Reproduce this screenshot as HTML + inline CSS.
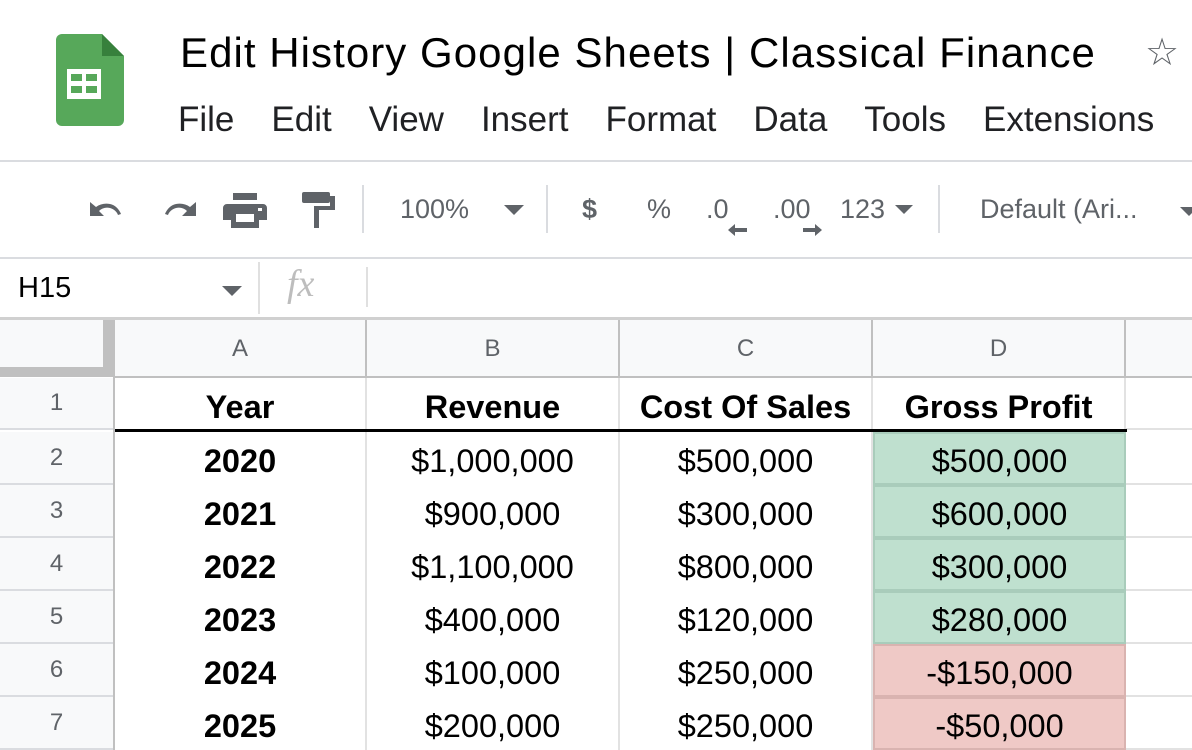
<!DOCTYPE html>
<html><head><meta charset="utf-8"><style>
body{margin:0;width:1192px;height:748px;overflow:hidden;background:#fff;font-family:"Liberation Sans",Arial,sans-serif;position:relative}
.a{position:absolute;white-space:nowrap}
.menu span{margin-right:37px}
.tb{color:#5f6368;font-size:27px}
.grid div.c{position:absolute;display:flex;align-items:center;justify-content:center;font-size:32.5px;color:#000;box-sizing:border-box;padding-top:6px}
.rh{position:absolute;left:0;width:113px;background:#f8f9fa;color:#5f6368;font-size:24px;display:flex;align-items:center;justify-content:center;border-bottom:2px solid #dadce0;box-sizing:border-box}
.ch{position:absolute;top:320px;height:57px;background:#f8f9fa;color:#5f6368;font-size:24px;display:flex;align-items:center;justify-content:center;border-right:2px solid #c0c0c0;box-sizing:border-box}
</style></head><body>
<svg class="a" style="left:56px;top:34px" width="68" height="92" viewBox="0 0 68 92"><path d="M6 0H46L68 22V86a6 6 0 0 1-6 6H6a6 6 0 0 1-6-6V6a6 6 0 0 1 6-6z" fill="#57a85a"/><path d="M46 0V22H68z" fill="#37803c"/><rect x="11" y="35" width="34" height="30" fill="#fff"/><rect x="15" y="40" width="11" height="7" fill="#57a85a"/><rect x="30" y="40" width="11" height="7" fill="#57a85a"/><rect x="15" y="52" width="11" height="7" fill="#57a85a"/><rect x="30" y="52" width="11" height="7" fill="#57a85a"/></svg>
<div class="a" style="left:180px;top:29px;font-size:42px;letter-spacing:1.05px;color:#000">Edit History Google Sheets | Classical Finance</div>
<div class="a" style="left:1145px;top:30px;font-size:38px;color:#5f6368">☆</div>
<div class="a menu" style="left:178px;top:100px;font-size:35px;color:#202124"><span>File</span><span>Edit</span><span>View</span><span>Insert</span><span>Format</span><span>Data</span><span>Tools</span><span>Extensions</span></div>
<div class="a" style="left:0;top:160px;width:1192px;height:2px;background:#dadce0"></div>
<svg class="a" style="left:86px;top:190px" width="270" height="40" viewBox="0 0 270 40">
<g fill="#5f6368">
<path d="M4 12v14h14l-5-5c3-3 7-4 11-3 4 1 7 4 8 7l3-1c-2-5-6-9-11-10-5-1-10 0-14 3z"/>
<path d="M110 12v14H96l5-5c-3-3-7-4-11-3-4 1-7 4-8 7l-3-1c2-5 6-9 11-10 5-1 10 0 14 3z"/>
<rect x="147" y="3" width="24" height="7"/><path d="M141 14h36a4 4 0 0 1 4 4v12h-8v8h-28v-8h-8V18a4 4 0 0 1 4-4z"/><rect x="150" y="24" width="18" height="8" fill="#fff"/><rect x="172" y="18" width="4" height="3" fill="#fff"/>
<rect x="216" y="2" width="28" height="11" rx="2"/><path d="M244 6h5v14h-16v18h-5V16h16z"/>
</g></svg>
<div class="a" style="left:362px;top:185px;width:2px;height:48px;background:#dadce0"></div>
<div class="a tb" style="left:400px;top:194px">100%</div>
<div class="a" style="left:504px;top:205px;border-left:10px solid transparent;border-right:10px solid transparent;border-top:10px solid #5f6368"></div>
<div class="a" style="left:546px;top:185px;width:2px;height:48px;background:#dadce0"></div>
<div class="a tb" style="left:582px;top:194px;font-weight:bold">$</div>
<div class="a tb" style="left:647px;top:194px">%</div>
<div class="a tb" style="left:706px;top:194px">.0</div>
<svg class="a" style="left:726px;top:222px" width="100" height="16"><path d="M2 8l7-6v4h12v4H9v4z" fill="#5f6368"/><path d="M92 8l-7-6v4H73v4h12v4z" fill="#5f6368" transform="translate(4 0)"/></svg>
<div class="a tb" style="left:773px;top:194px">.00</div>
<div class="a tb" style="left:840px;top:194px">123</div>
<div class="a" style="left:895px;top:205px;border-left:9px solid transparent;border-right:9px solid transparent;border-top:9px solid #5f6368"></div>
<div class="a" style="left:938px;top:185px;width:2px;height:48px;background:#dadce0"></div>
<div class="a tb" style="left:980px;top:194px">Default (Ari...</div>
<div class="a" style="left:1180px;top:207px;border-left:9px solid transparent;border-right:9px solid transparent;border-top:9px solid #5f6368"></div>
<div class="a" style="left:0;top:257px;width:1192px;height:2px;background:#dadce0"></div>
<div class="a" style="left:18px;top:272px;font-size:29px;color:#000">H15</div>
<div class="a" style="left:222px;top:286px;border-left:10px solid transparent;border-right:10px solid transparent;border-top:10px solid #5f6368"></div>
<div class="a" style="left:258px;top:262px;width:2px;height:52px;background:#e0e0e0"></div>
<div class="a" style="left:287px;top:262px;font-size:38px;color:#bdbdbd;font-family:'Liberation Serif',serif;font-style:italic">fx</div>
<div class="a" style="left:366px;top:267px;width:2px;height:40px;background:#e0e0e0"></div>
<div class="a" style="left:0;top:317px;width:1192px;height:3px;background:#d0d0d0"></div>
<div class="a" style="left:0;top:320px;width:113px;height:57px;background:#f8f9fa"></div>
<div class="a" style="left:103px;top:320px;width:10px;height:57px;background:#c0c0c0"></div>
<div class="a" style="left:0;top:367px;width:113px;height:10px;background:#c0c0c0"></div>
<div class="ch" style="left:113px;width:254px;border-left:2px solid #c0c0c0">A</div>
<div class="ch" style="left:367px;width:253px">B</div>
<div class="ch" style="left:620px;width:253px">C</div>
<div class="ch" style="left:873px;width:253px">D</div>
<div class="ch" style="left:1126px;width:70px;border-right:none"></div>
<div class="a" style="left:113px;top:376px;width:1080px;height:2px;background:#c0c0c0"></div>
<div class="a" style="left:113px;top:320px;width:2px;height:430px;background:#c0c0c0"></div>
<div class="grid" id="g"></div>
<script>
var rows=[["Year","Revenue","Cost Of Sales","Gross Profit"],["2020","$1,000,000","$500,000","$500,000"],["2021","$900,000","$300,000","$600,000"],["2022","$1,100,000","$800,000","$300,000"],["2023","$400,000","$120,000","$280,000"],["2024","$100,000","$250,000","-$150,000"],["2025","$200,000","$250,000","-$50,000"]];
var xs=[115,367,620,873,1126],h='';
var tops=[378,432,485,538,591,644,697];
for(var r=0;r<7;r++){var t=tops[r],hh=(r==0?52:53);
h+='<div class="rh" style="top:'+t+'px;height:'+hh+'px">'+(r+1)+'</div>';
h+='<div class="a" style="left:115px;top:'+(t+hh-2)+'px;width:1080px;height:2px;background:#e2e2e2"></div>';
for(var c=0;c<4;c++){var bg='#fff',bd='';
if(c==3&&r>0){bg=r<5?'#bfe0cf':'#efc9c6';bd=';border:2px solid '+(r<5?'#a9ccbb':'#d9b3b0');}
var fw=(r==0||c==0)?'bold':'normal';
h+='<div class="c" style="left:'+xs[c]+'px;top:'+t+'px;width:'+(xs[c+1]-xs[c])+'px;height:'+hh+'px;background:'+bg+';font-weight:'+fw+';border-right:2px solid #e2e2e2'+bd+'">'+rows[r][c]+'</div>';}}
h+='<div class="a" style="left:115px;top:429px;width:1012px;height:3px;background:#000"></div>';
document.getElementById('g').innerHTML=h;
</script>
</body></html>
